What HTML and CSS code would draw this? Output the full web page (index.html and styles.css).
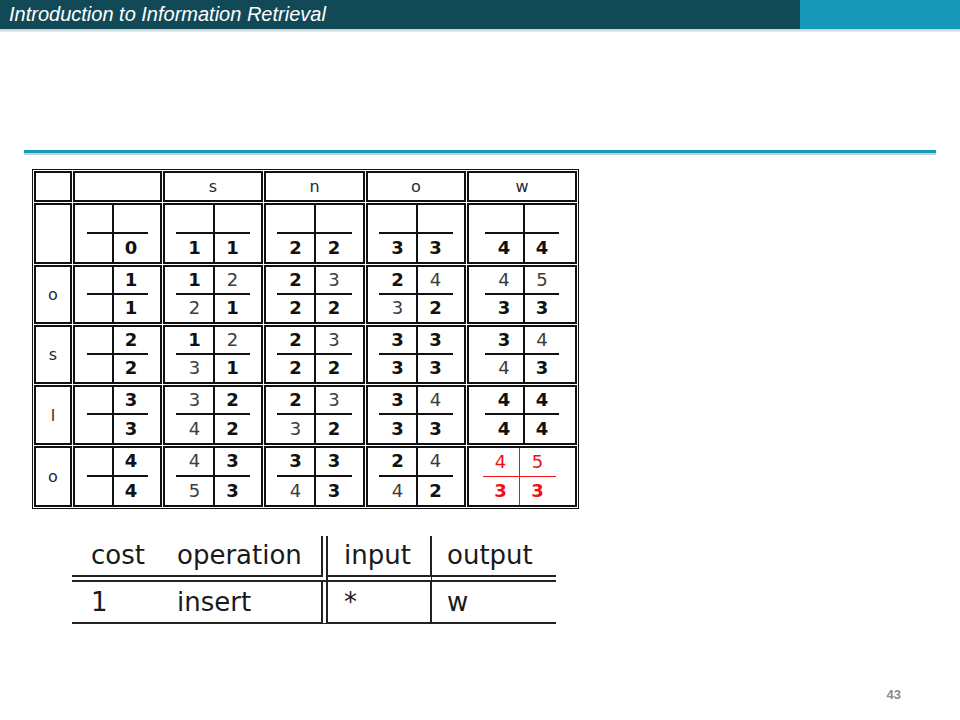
FILE: index.html
```html
<!DOCTYPE html>
<html lang="en">
<head>
<meta charset="utf-8">
<title>Introduction to Information Retrieval</title>
<link rel="stylesheet" href="styles.css">
</head>
<body>
<div class="slide">
  <header class="topbar">
    <div class="title">Introduction to Information Retrieval</div>
    <div class="accent"></div>
  </header>
  <div class="shade"></div>
  <div class="divider"></div>

  <div class="matrix">
    <div class="cell head"></div>
    <div class="cell head"></div>
    <div class="cell head">s</div>
    <div class="cell head">n</div>
    <div class="cell head">o</div>
    <div class="cell head">w</div>

    <div class="cell label"></div>
    <div class="cell num"><div class="pair p2"><span class="q"></span><span class="q"></span><span class="q"></span><span class="q b">0</span></div></div>
    <div class="cell num"><div class="pair ps"><span class="q"></span><span class="q"></span><span class="q b">1</span><span class="q b">1</span></div></div>
    <div class="cell num"><div class="pair pn"><span class="q"></span><span class="q"></span><span class="q b">2</span><span class="q b">2</span></div></div>
    <div class="cell num"><div class="pair po"><span class="q"></span><span class="q"></span><span class="q b">3</span><span class="q b">3</span></div></div>
    <div class="cell num"><div class="pair pw"><span class="q"></span><span class="q"></span><span class="q b">4</span><span class="q b">4</span></div></div>

    <div class="cell label">o</div>
    <div class="cell num"><div class="pair p2"><span class="q"></span><span class="q b">1</span><span class="q"></span><span class="q b">1</span></div></div>
    <div class="cell num"><div class="pair ps"><span class="q b">1</span><span class="q">2</span><span class="q">2</span><span class="q b">1</span></div></div>
    <div class="cell num"><div class="pair pn"><span class="q b">2</span><span class="q">3</span><span class="q b">2</span><span class="q b">2</span></div></div>
    <div class="cell num"><div class="pair po"><span class="q b">2</span><span class="q">4</span><span class="q">3</span><span class="q b">2</span></div></div>
    <div class="cell num"><div class="pair pw"><span class="q">4</span><span class="q">5</span><span class="q b">3</span><span class="q b">3</span></div></div>

    <div class="cell label">s</div>
    <div class="cell num"><div class="pair p2"><span class="q"></span><span class="q b">2</span><span class="q"></span><span class="q b">2</span></div></div>
    <div class="cell num"><div class="pair ps"><span class="q b">1</span><span class="q">2</span><span class="q">3</span><span class="q b">1</span></div></div>
    <div class="cell num"><div class="pair pn"><span class="q b">2</span><span class="q">3</span><span class="q b">2</span><span class="q b">2</span></div></div>
    <div class="cell num"><div class="pair po"><span class="q b">3</span><span class="q b">3</span><span class="q b">3</span><span class="q b">3</span></div></div>
    <div class="cell num"><div class="pair pw"><span class="q b">3</span><span class="q">4</span><span class="q">4</span><span class="q b">3</span></div></div>

    <div class="cell label">l</div>
    <div class="cell num"><div class="pair p2"><span class="q"></span><span class="q b">3</span><span class="q"></span><span class="q b">3</span></div></div>
    <div class="cell num"><div class="pair ps"><span class="q">3</span><span class="q b">2</span><span class="q">4</span><span class="q b">2</span></div></div>
    <div class="cell num"><div class="pair pn"><span class="q b">2</span><span class="q">3</span><span class="q">3</span><span class="q b">2</span></div></div>
    <div class="cell num"><div class="pair po"><span class="q b">3</span><span class="q">4</span><span class="q b">3</span><span class="q b">3</span></div></div>
    <div class="cell num"><div class="pair pw"><span class="q b">4</span><span class="q b">4</span><span class="q b">4</span><span class="q b">4</span></div></div>

    <div class="cell label">o</div>
    <div class="cell num"><div class="pair p2"><span class="q"></span><span class="q b">4</span><span class="q"></span><span class="q b">4</span></div></div>
    <div class="cell num"><div class="pair ps"><span class="q">4</span><span class="q b">3</span><span class="q">5</span><span class="q b">3</span></div></div>
    <div class="cell num"><div class="pair pn"><span class="q b">3</span><span class="q b">3</span><span class="q">4</span><span class="q b">3</span></div></div>
    <div class="cell num"><div class="pair po"><span class="q b">2</span><span class="q">4</span><span class="q">4</span><span class="q b">2</span></div></div>
    <div class="cell num"><div class="pair red"><span class="q">4</span><span class="q">5</span><span class="q b">3</span><span class="q b">3</span></div></div>
  </div>

  <table class="ops">
    <thead>
      <tr>
        <th class="c-cost">cost</th>
        <th class="c-op">operation</th>
        <th class="c-in">input</th>
        <th class="c-out">output</th>
      </tr>
    </thead>
    <tbody>
      <tr>
        <td class="c-cost">1</td>
        <td class="c-op">insert</td>
        <td class="c-in">*</td>
        <td class="c-out">w</td>
      </tr>
    </tbody>
  </table>

  <div class="pagenum">43</div>
</div>
</body>
</html>
```

FILE: styles.css
```css
* {
  box-sizing: border-box;
}

html,
body {
  margin: 0;
  padding: 0;
  background: #ffffff;
}

.slide {
  width: 960px;
  height: 720px;
  display: flex;
  flex-direction: column;
  overflow: hidden;
  font-family: "DejaVu Sans", sans-serif;
  background: #ffffff;
}

/* ---------- top bar ---------- */
.topbar {
  display: flex;
  height: 29px;
}

.title {
  width: 800px;
  padding-left: 9px;
  background: #114a56;
  color: #ffffff;
  font-family: "Liberation Sans", Arial, sans-serif;
  font-style: italic;
  font-size: 20px;
  line-height: 29px;
  white-space: nowrap;
}

.accent {
  flex: 1;
  background: #1698b8;
}

.shade {
  height: 3px;
  background: linear-gradient(#c3cdd0, #eef1f2);
}

.divider {
  margin: 118px 24px 0 24px;
  height: 5px;
  border-top: 3px solid #1a98b5;
  background: #b7d4db;
}

/* ---------- edit distance matrix ---------- */
.matrix {
  margin: 14px 0 0 32px;
  width: max-content;
  display: grid;
  grid-template-columns: 38px 89px 100px 101px 100px 110px;
  grid-template-rows: 31px 61px 59px 59px 60px 61px;
  gap: 1px;
  padding: 1px;
  border: 1px solid #111;
}

.cell {
  border: 2px solid #111;
  display: flex;
  justify-content: center;
  align-items: center;
  color: #2a2a2a;
  font-size: 16px;
}

.cell.num {
  align-items: stretch;
}

.pair {
  display: grid;
  grid-template-rows: 1fr 1fr;
}

.p2 { grid-template-columns: 25px 36px; }
.ps { grid-template-columns: 37px 37px; }
.pn { grid-template-columns: 37px 38px; }
.po { grid-template-columns: 37px 37px; }
.pw { grid-template-columns: 38px 36px; }
.red {
  grid-template-columns: 36px 37px;
  margin-right: 6px;
}

.q {
  display: flex;
  align-items: center;
  justify-content: center;
  font-size: 18px;
  line-height: 1;
  font-weight: 400;
  color: #3c3c3c;
}

.q.b {
  font-weight: 700;
  color: #111;
}

.pair .q:nth-child(1),
.pair .q:nth-child(2) {
  border-bottom: 2px solid #111;
}

.pair .q:nth-child(2),
.pair .q:nth-child(4) {
  border-left: 2px solid #111;
}

.pair.red .q {
  color: #f01010;
}

.pair.red .q:nth-child(1),
.pair.red .q:nth-child(2) {
  border-bottom: 1px solid #f01010;
}

.pair.red .q:nth-child(2),
.pair.red .q:nth-child(4) {
  border-left: 1px solid #f01010;
}

/* ---------- operation table ---------- */
.ops {
  margin: 27px 0 0 72px;
  border-collapse: separate;
  border-spacing: 0;
  table-layout: fixed;
  width: 484px;
  font-size: 26px;
  color: #1a1a1a;
}

.ops th,
.ops td {
  font-weight: normal;
  text-align: left;
  white-space: nowrap;
  padding-top: 0;
  padding-bottom: 0;
  padding-right: 0;
}

.ops th {
  line-height: 39px;
  border-bottom: 7px double #222;
}

.ops td {
  line-height: 40px;
  border-bottom: 2px solid #222;
}

.ops .c-cost {
  width: 88px;
  padding-left: 19px;
}

.ops .c-op {
  width: 168px;
  padding-left: 17px;
  border-right: 7px double #222;
}

.ops .c-in {
  width: 104px;
  padding-left: 16px;
  border-right: 2px solid #222;
}

.ops .c-out {
  width: 124px;
  padding-left: 15px;
}

/* ---------- footer ---------- */
.pagenum {
  margin-top: auto;
  align-self: flex-end;
  margin-right: 59px;
  margin-bottom: 18px;
  font-family: "Liberation Sans", Arial, sans-serif;
  font-weight: bold;
  font-size: 13px;
  line-height: 15px;
  color: #8a8a8a;
}
```
